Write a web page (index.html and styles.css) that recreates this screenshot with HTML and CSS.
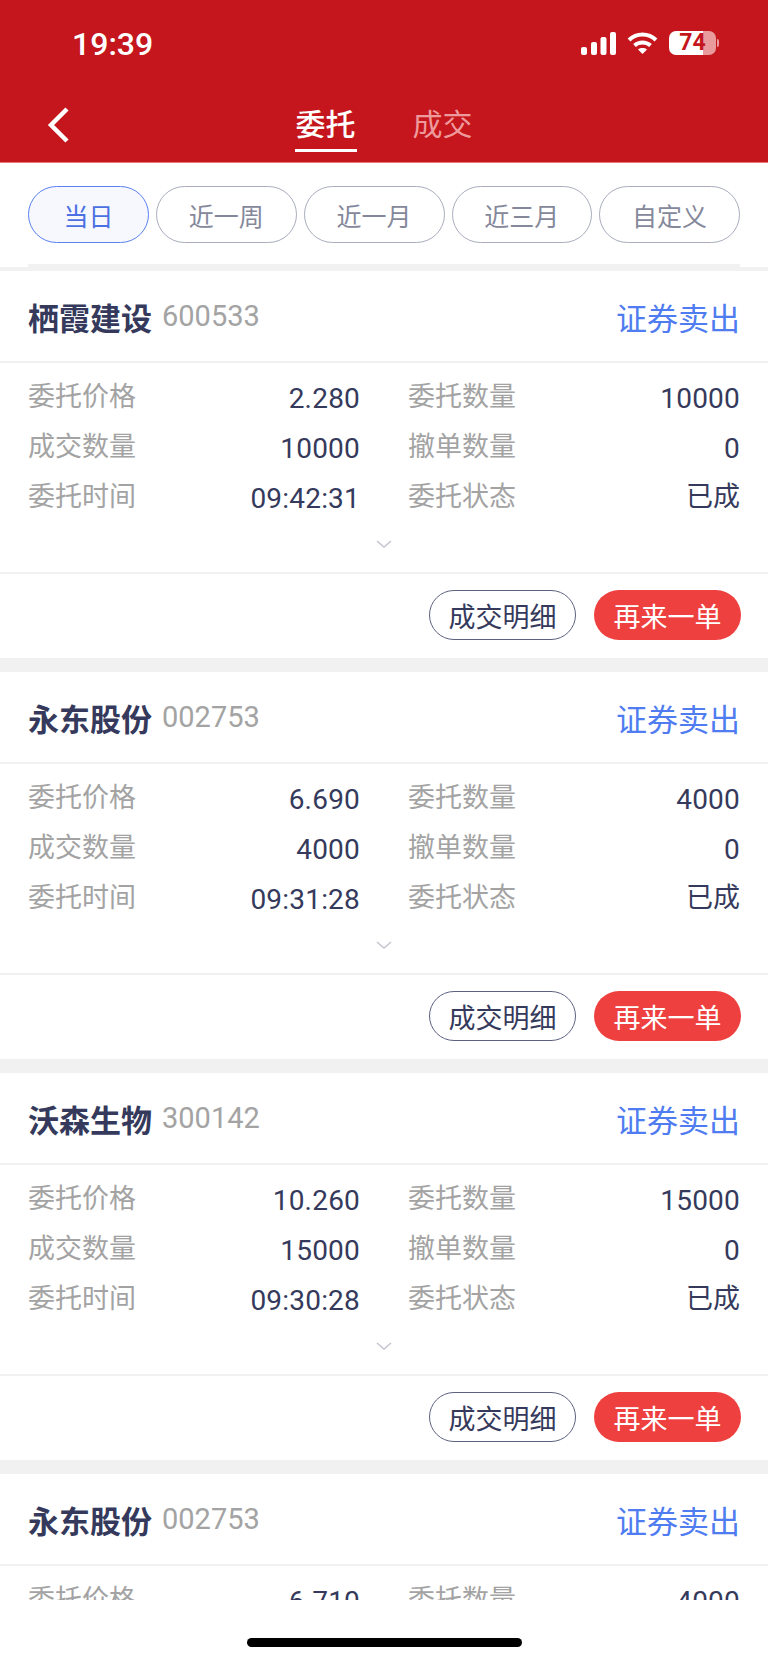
FILE: index.html
```html
<!DOCTYPE html>
<html lang="zh-CN">
<head>
    <meta charset="UTF-8">
    <meta name="viewport" content="width=device-width, initial-scale=1.0">
    <title>委托</title>
    <link rel="stylesheet" href="styles.css">
</head>
<body>

    <!-- Red header with status bar and tabs -->
    <header class="app-header">
        <div class="status-bar">
            <span class="status-time">19:39</span>
            <div class="status-icons">
                <svg class="icon-signal" width="35" height="23" viewBox="0 0 35 23" fill="#fff">
                    <rect x="0" y="15" width="6" height="8" rx="2"/>
                    <rect x="10" y="10" width="6" height="13" rx="2"/>
                    <rect x="19.5" y="5" width="6" height="18" rx="2"/>
                    <rect x="29" y="0" width="6" height="23" rx="2"/>
                </svg>
                <svg class="icon-wifi" width="31" height="22" viewBox="0 0 31 22" fill="none" stroke="#fff" stroke-width="4">
                    <path d="M2 8 C9.5 0.5 21.5 0.5 29 8"/>
                    <path d="M7.5 13.5 C12 9.5 19 9.5 23.5 13.5"/>
                    <path d="M15.5 22 L11 17.5 C13.5 15.6 17.5 15.6 20 17.5 Z" fill="#fff" stroke="none"/>
                </svg>
                <div class="battery">
                    <div class="battery-body">
                        <span class="battery-level">74</span>
                    </div>
                    <div class="battery-nub"></div>
                </div>
            </div>
        </div>
        <nav class="top-nav">
            <svg class="back-icon" width="22" height="36" viewBox="0 0 22 36" fill="none" stroke="#fff" stroke-width="4.5">
                <path d="M20 2 L4 18 L20 34"/>
            </svg>
            <div class="tabs">
                <span class="tab tab-active">委托</span>
                <span class="tab">成交</span>
            </div>
        </nav>
    </header>

    <!-- Date filters -->
    <div class="filters">
        <div class="filter-row">
            <span class="chip chip-active">当日</span>
            <span class="chip">近一周</span>
            <span class="chip">近一月</span>
            <span class="chip">近三月</span>
            <span class="chip">自定义</span>
        </div>
    </div>

    <!-- Order list -->
    <main class="order-list">
        <section class="order-card">
            <div class="card-head">
                <div class="stock">
                    <span class="stock-name">栖霞建设</span>
                    <span class="stock-code">600533</span>
                </div>
                <span class="order-type">证券卖出</span>
            </div>
            <div class="card-body">
                <div class="detail-grid">
                    <div class="detail"><span class="detail-label">委托价格</span><span class="detail-value">2.280</span></div>
                    <div class="detail"><span class="detail-label">委托数量</span><span class="detail-value">10000</span></div>
                    <div class="detail"><span class="detail-label">成交数量</span><span class="detail-value">10000</span></div>
                    <div class="detail"><span class="detail-label">撤单数量</span><span class="detail-value">0</span></div>
                    <div class="detail"><span class="detail-label">委托时间</span><span class="detail-value">09:42:31</span></div>
                    <div class="detail"><span class="detail-label">委托状态</span><span class="detail-status">已成</span></div>
                </div>
                <svg class="expand-icon" width="16" height="8" viewBox="0 0 16 8" fill="none" stroke="#c4c6cf" stroke-width="1.5"><path d="M1 1 L8 7 L15 1"/></svg>
            </div>
            <div class="card-foot">
                <button class="btn btn-outline">成交明细</button>
                <button class="btn btn-red">再来一单</button>
            </div>
        </section>

        <section class="order-card">
            <div class="card-head">
                <div class="stock">
                    <span class="stock-name">永东股份</span>
                    <span class="stock-code">002753</span>
                </div>
                <span class="order-type">证券卖出</span>
            </div>
            <div class="card-body">
                <div class="detail-grid">
                    <div class="detail"><span class="detail-label">委托价格</span><span class="detail-value">6.690</span></div>
                    <div class="detail"><span class="detail-label">委托数量</span><span class="detail-value">4000</span></div>
                    <div class="detail"><span class="detail-label">成交数量</span><span class="detail-value">4000</span></div>
                    <div class="detail"><span class="detail-label">撤单数量</span><span class="detail-value">0</span></div>
                    <div class="detail"><span class="detail-label">委托时间</span><span class="detail-value">09:31:28</span></div>
                    <div class="detail"><span class="detail-label">委托状态</span><span class="detail-status">已成</span></div>
                </div>
                <svg class="expand-icon" width="16" height="8" viewBox="0 0 16 8" fill="none" stroke="#c4c6cf" stroke-width="1.5"><path d="M1 1 L8 7 L15 1"/></svg>
            </div>
            <div class="card-foot">
                <button class="btn btn-outline">成交明细</button>
                <button class="btn btn-red">再来一单</button>
            </div>
        </section>

        <section class="order-card">
            <div class="card-head">
                <div class="stock">
                    <span class="stock-name">沃森生物</span>
                    <span class="stock-code">300142</span>
                </div>
                <span class="order-type">证券卖出</span>
            </div>
            <div class="card-body">
                <div class="detail-grid">
                    <div class="detail"><span class="detail-label">委托价格</span><span class="detail-value">10.260</span></div>
                    <div class="detail"><span class="detail-label">委托数量</span><span class="detail-value">15000</span></div>
                    <div class="detail"><span class="detail-label">成交数量</span><span class="detail-value">15000</span></div>
                    <div class="detail"><span class="detail-label">撤单数量</span><span class="detail-value">0</span></div>
                    <div class="detail"><span class="detail-label">委托时间</span><span class="detail-value">09:30:28</span></div>
                    <div class="detail"><span class="detail-label">委托状态</span><span class="detail-status">已成</span></div>
                </div>
                <svg class="expand-icon" width="16" height="8" viewBox="0 0 16 8" fill="none" stroke="#c4c6cf" stroke-width="1.5"><path d="M1 1 L8 7 L15 1"/></svg>
            </div>
            <div class="card-foot">
                <button class="btn btn-outline">成交明细</button>
                <button class="btn btn-red">再来一单</button>
            </div>
        </section>

        <section class="order-card">
            <div class="card-head">
                <div class="stock">
                    <span class="stock-name">永东股份</span>
                    <span class="stock-code">002753</span>
                </div>
                <span class="order-type">证券卖出</span>
            </div>
            <div class="card-body">
                <div class="detail-grid">
                    <div class="detail"><span class="detail-label">委托价格</span><span class="detail-value">6.710</span></div>
                    <div class="detail"><span class="detail-label">委托数量</span><span class="detail-value">4000</span></div>
                </div>
            </div>
        </section>
    </main>

    <!-- Home indicator -->
    <footer class="home-area">
        <div class="home-bar"></div>
    </footer>

</body>
</html>
```

FILE: styles.css
```css
/* Base styles */
body {
    font-family: Roboto, 'Noto Sans CJK SC', sans-serif;
    margin: 0;
    height: 1662px;
    overflow: hidden;
    display: flex;
    flex-direction: column;
    background-color: #fff;
    color: #353a5c;
}

/* Red header */
.app-header {
    flex: none;
    height: 163px;
    background-color: #c4161c;
    border-bottom: 1px solid #e87a7a;
    box-sizing: border-box;
    color: #fff;
}

.status-bar {
    height: 86px;
    padding: 2px 49px 0 72px;
    box-sizing: border-box;
    display: flex;
    justify-content: space-between;
    align-items: center;
}

.status-time {
    font-size: 32px;
    font-weight: 500;
}

.status-icons {
    display: flex;
    align-items: center;
    gap: 11px;
    margin-top: -2px;
}

.battery {
    display: flex;
    align-items: center;
    gap: 1px;
}

.battery-body {
    width: 47px;
    height: 24px;
    border-radius: 7px;
    background: linear-gradient(to right, #fff 34px, #e89a9d 34px);
    display: flex;
    align-items: center;
    justify-content: center;
}

.battery-level {
    color: #c4161c;
    font-size: 23px;
    font-weight: 700;
    line-height: 24px;
}

.battery-nub {
    width: 2px;
    height: 8px;
    border-radius: 0 2px 2px 0;
    background-color: #e89a9d;
}

/* Back arrow and tabs */
.top-nav {
    height: 76px;
    padding: 0 47px;
    display: grid;
    grid-template-columns: 1fr auto 1fr;
    align-items: start;
}

.back-icon {
    margin-top: 21px;
}

.tabs {
    display: flex;
    gap: 55px;
    padding-top: 16px;
}

.tab {
    font-size: 30px;
    line-height: 45px;
    height: 45px;
    padding: 0 1px 2px;
    color: #ee9a9c;
}

.tab-active {
    color: #fff;
    font-weight: 500;
    border-bottom: 3px solid #fff;
}

/* Filters */
.filters {
    flex: none;
    padding: 23px 28px 0;
}

.filter-row {
    display: flex;
    gap: 7px;
    padding-bottom: 21px;
    border-bottom: 3px solid #f1f1f1;
}

.chip {
    flex: 1;
    height: 57px;
    box-sizing: border-box;
    display: flex;
    align-items: center;
    justify-content: center;
    font-size: 25px;
    color: #85889b;
    border: 1px solid #a9adbd;
    border-radius: 29px;
}

.chip-active {
    flex: none;
    width: 121px;
    color: #4a70e2;
    background-color: #f6f8fe;
    border-color: #5b82f0;
}

/* Orders */
.order-list {
    flex: 1;
    min-height: 0;
    overflow: hidden;
    padding-top: 4px;
    background-color: #f1f1f1;
}

.order-card {
    background-color: #fff;
    margin-bottom: 14px;
}

.card-head {
    height: 90px;
    padding: 0 28px;
    display: flex;
    justify-content: space-between;
    align-items: center;
    border-bottom: 2px solid #f1f1f1;
}

.stock {
    display: flex;
    align-items: center;
    gap: 10px;
}

.stock-name {
    font-size: 31px;
    font-weight: 700;
}

.stock-code {
    font-size: 29px;
    color: #a3a3a3;
}

.order-type {
    font-size: 31px;
    color: #4f7cf0;
}

.card-body {
    height: 209px;
    border-bottom: 2px solid #f1f1f1;
    padding: 0 28px;
}

.detail-grid {
    display: grid;
    grid-template-columns: 1fr 1fr;
    column-gap: 48px;
    padding-top: 9px;
}

.detail {
    height: 50px;
    display: flex;
    justify-content: space-between;
    align-items: center;
    font-size: 27px;
}

.detail-label {
    color: #a3a3a3;
    margin-top: -5px;
}

.detail-value {
    color: #353a5c;
    font-size: 28px;
    letter-spacing: 0.2px;
    margin-top: 3px;
}

.detail-status {
    color: #353a5c;
    margin-top: -5px;
}

.expand-icon {
    display: block;
    margin: 18px auto 0;
}

.card-foot {
    height: 84px;
    padding: 0 27px 2px 0;
    box-sizing: border-box;
    display: flex;
    justify-content: flex-end;
    align-items: center;
    gap: 18px;
}

.btn {
    width: 147px;
    height: 50px;
    padding: 0;
    box-sizing: border-box;
    border-radius: 25px;
    font-family: inherit;
    font-size: 27px;
}

.btn-outline {
    background-color: #fff;
    color: #353a5c;
    border: 1px solid #5c6180;
}

.btn-red {
    background-color: #ef4040;
    color: #fff;
    border: none;
}

/* Home indicator */
.home-area {
    flex: none;
    height: 62px;
    background-color: #fff;
    display: flex;
    justify-content: center;
    padding-top: 38px;
    box-sizing: border-box;
}

.home-bar {
    width: 275px;
    height: 9px;
    border-radius: 5px;
    background-color: #000;
}
```
